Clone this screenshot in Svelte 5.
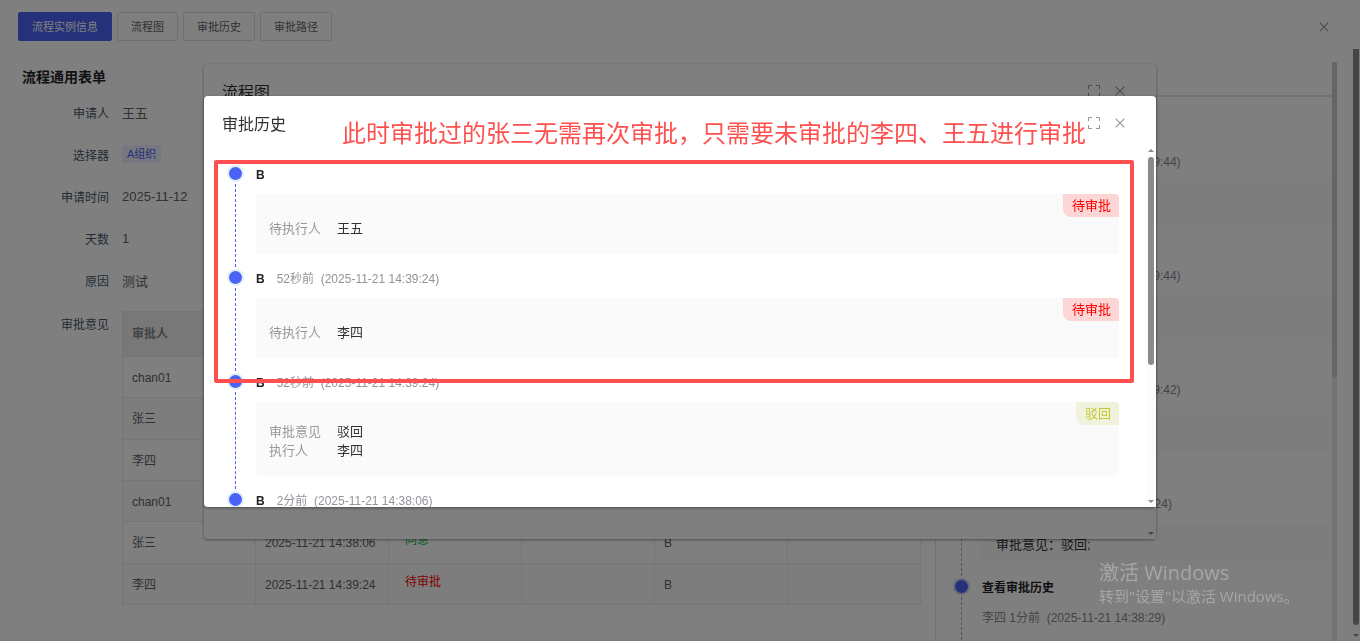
<script>
  const tabs = ['流程实例信息', '流程图', '审批历史', '审批路径'];
  let active = tabs[0];

  const columns = ['审批人', '审批时间', '审批结果', '审批意见', '节点', '备注'];
  const approvals = [
    { user: 'chan01', time: '2025-11-21 14:29:42', status: '同意', type: 'pass', node: 'A' },
    { user: '张三', time: '2025-11-21 14:29:44', status: '同意', type: 'pass', node: 'B' },
    { user: '李四', time: '2025-11-21 14:39:24', status: '驳回', type: 'back', node: 'B' },
    { user: 'chan01', time: '2025-11-21 14:38:06', status: '同意', type: 'pass', node: 'A' },
    { user: '张三', time: '2025-11-21 14:38:06', status: '同意', type: 'pass', node: 'B' },
    { user: '李四', time: '2025-11-21 14:39:24', status: '待审批', type: 'wait', node: 'B' }
  ];

  const logs = [
    { title: '查看审批历史', text: 'chan01 9分前', time: '2025-11-21 14:29:44', note: '' },
    { title: '查看审批历史', text: 'chan01 9分前', time: '2025-11-21 14:29:44', note: '' },
    { title: '查看审批历史', text: 'chan01 9分前', time: '2025-11-21 14:29:42', note: '' },
    { title: '审批', text: '李四 52秒前', time: '2025-11-21 14:39:24', note: '审批意见：驳回;' },
    { title: '查看审批历史', text: '李四 1分前', time: '2025-11-21 14:38:29', note: '' }
  ];

  const history = [
    { node: 'B', ago: '', time: '', status: '待审批', type: 'wait', rows: [['待执行人', '王五']] },
    { node: 'B', ago: '52秒前', time: '2025-11-21 14:39:24', status: '待审批', type: 'wait', rows: [['待执行人', '李四']] },
    { node: 'B', ago: '52秒前', time: '2025-11-21 14:39:24', status: '驳回', type: 'back', rows: [['审批意见', '驳回'], ['执行人', '李四']] },
    { node: 'B', ago: '2分前', time: '2025-11-21 14:38:06', status: '', type: '', rows: [] }
  ];
</script>

{#snippet closeIcon()}
  <svg width="12" height="12" viewBox="0 0 12 12" fill="none" stroke="currentColor" stroke-width="1.1">
    <path d="M1.7 1.7l8.6 8.6M10.3 1.7l-8.6 8.6" />
  </svg>
{/snippet}

{#snippet fullIcon()}
  <svg width="12" height="12" viewBox="0 0 12 12" fill="none" stroke="currentColor">
    <path d="M.5 4V.5H4M8 .5h3.500V4M11.500 8v3.500H8M4 11.500H.5V8" />
  </svg>
{/snippet}

<div class="page">
  <header>
    <nav>
      {#each tabs as tab}
        <button class="tab" class:active={tab === active} on:click={() => (active = tab)}>{tab}</button>
      {/each}
    </nav>
    <button class="icon" aria-label="关闭">{@render closeIcon()}</button>
  </header>

  <div class="content">
    <main>
      <h2>流程通用表单</h2>
      <div class="row"><span class="name">申请人</span><span>王五</span></div>
      <div class="row"><span class="name">选择器</span><span class="chip">A组织</span></div>
      <div class="row"><span class="name">申请时间</span><span>2025-11-12</span></div>
      <div class="row"><span class="name">天数</span><span>1</span></div>
      <div class="row"><span class="name">原因</span><span>测试</span></div>
      <div class="row top">
        <span class="name">审批意见</span>
        <div class="table-wrap">
          <table>
            <thead>
              <tr>{#each columns as column}<th>{column}</th>{/each}</tr>
            </thead>
            <tbody>
              {#each approvals as item}
                <tr>
                  <td>{item.user}</td>
                  <td>{item.time}</td>
                  <td><span class="status {item.type}">{item.status}</span></td>
                  <td></td>
                  <td>{item.node}</td>
                  <td></td>
                </tr>
              {/each}
            </tbody>
          </table>
        </div>
      </div>
    </main>

    <aside>
      <div class="side-body">
        <div class="side-head"></div>
        <ul class="logs">
          {#each logs as log}
            <li>
              <div class="rail"><i class="dot"></i><i class="line"></i></div>
              <div class="log">
                <strong>{log.title}</strong>
                <p>{log.text}&nbsp; ({log.time})</p>
                <div class="note">{log.note}</div>
              </div>
            </li>
          {/each}
        </ul>
      </div>
      <div class="side-bar"><i></i></div>
    </aside>

    <div class="page-bar"><i class="thumb"></i><i class="down"></i></div>
  </div>
</div>

<section class="dialog chart">
  <div class="dialog-head">
    <h3>流程图</h3>
    <button class="icon" aria-label="全屏">{@render fullIcon()}</button>
    <button class="icon" aria-label="关闭">{@render closeIcon()}</button>
  </div>
  <div class="dialog-body">
    <div class="timeline"></div>
    <div class="bar"><i class="up"></i><i class="thumb"></i><i class="down"></i></div>
  </div>
</section>

<div class="mask"></div>

<section class="dialog history">
  <div class="dialog-head">
    <h3>审批历史</h3>
    <button class="icon" aria-label="全屏">{@render fullIcon()}</button>
    <button class="icon" aria-label="关闭">{@render closeIcon()}</button>
  </div>
  <div class="dialog-body">
    <ul class="timeline">
      {#each history as item}
        <li>
          <div class="rail"><i class="dot"></i><i class="line"></i></div>
          <div class="step">
            <div class="step-head">
              <strong>{item.node}</strong>
              {#if item.time}<span>{item.ago}&nbsp; ({item.time})</span>{/if}
            </div>
            {#if item.status}
              <div class="card">
                <span class="tag {item.type}">{item.status}</span>
                {#each item.rows as [key, value]}
                  <div class="pair"><span>{key}</span>{value}</div>
                {/each}
              </div>
            {/if}
          </div>
        </li>
      {/each}
    </ul>
    <div class="bar"><i class="up"></i><i class="thumb"></i><i class="down"></i></div>
  </div>
  <p class="remark">此时审批过的张三无需再次审批，只需要未审批的李四、王五进行审批</p>
  <div class="frame"></div>
</section>

<div class="watermark">
  <p>激活 Windows</p>
  <small>转到"设置"以激活 Windows。</small>
</div>

<style>
  :global(body) {
    font-family: "Liberation Sans", "Noto Sans CJK SC", sans-serif;
    font-size: 13px;
    color: #606266;
    background: #fff;
    overflow: hidden;
  }
  h2, h3, p, ul {
    margin: 0;
    padding: 0;
    list-style: none;
  }
  button {
    font-family: inherit;
    cursor: pointer;
  }
  .page {
    display: flex;
    flex-direction: column;
    height: 100vh;
    overflow: hidden;
  }
  header {
    display: flex;
    justify-content: space-between;
    align-items: center;
    padding: 12px 30px 8px 18px;
    box-shadow: 0 1px 3px rgba(0, 0, 0, 0.04);
  }
  nav {
    display: flex;
    gap: 5px;
  }
  .tab {
    height: 29px;
    padding: 0 13px 2px;
    font-size: 11px;
    color: #606266;
    background: #fff;
    border: 1px solid #dcdfe6;
    border-radius: 2px;
  }
  .tab.active {
    color: #fff;
    background: #4a62f6;
    border-color: #4a62f6;
  }
  .icon {
    display: flex;
    padding: 0;
    border: 0;
    background: none;
    color: #909399;
  }
  .content {
    display: flex;
    flex: 1;
    min-height: 0;
  }
  main {
    flex: 1;
    min-width: 0;
    padding: 18px 14px 0 22px;
  }
  h2 {
    font-size: 14px;
    line-height: 20px;
    color: #1f2225;
    margin-bottom: 4px;
  }
  .row {
    display: flex;
    align-items: center;
    height: 42px;
  }
  .row.top {
    align-items: flex-start;
    height: auto;
    padding-top: 10px;
  }
  .name {
    width: 87px;
    margin-right: 13px;
    flex-shrink: 0;
    text-align: right;
    font-size: 12px;
    color: #48576a;
  }
  .row.top .name {
    line-height: 28px;
  }
  .chip {
    padding: 0 5px;
    font-size: 11px;
    line-height: 18px;
    color: #4a62f6;
    background: #eceffe;
    border-radius: 2px;
  }
  .table-wrap {
    flex: 1;
  }
  table {
    width: 100%;
    height: 294px;
    table-layout: fixed;
    border-collapse: collapse;
    font-size: 12px;
    line-height: 20px;
  }
  th, td {
    height: 41px;
    box-sizing: border-box;
    padding: 2px 9px 0;
    text-align: left;
    border: 1px solid #e9ebf2;
  }
  th {
    height: 45px;
    padding-top: 0;
    color: #85888e;
    background: #f1f1f2;
  }
  tbody tr:nth-child(even) {
    background: #fafafa;
  }
  .status {
    display: block;
    padding: 0 7px 6px;
  }
  .status.pass {
    color: #00b42a;
  }
  .status.back {
    color: #c0c832;
  }
  .status.wait {
    color: #f00;
  }
  aside {
    display: flex;
    width: 402px;
    margin-right: 15px;
    padding-top: 13px;
    overflow: hidden;
  }
  .side-body {
    flex: 1;
    border-left: 1px solid #e4e7ed;
  }
  .side-head {
    height: 33px;
    border-bottom: 2px solid #dfe2ea;
  }
  .logs {
    padding: 27px 0 0 18px;
  }
  li {
    display: flex;
  }
  .rail {
    display: flex;
    flex-direction: column;
    align-items: center;
    flex-shrink: 0;
    width: 14px;
  }
  .dot {
    width: 13px;
    height: 13px;
    border-radius: 50%;
    background: #4a62f6;
    box-shadow: 0 0 0 2px #e0f1fb;
  }
  .line {
    flex: 1;
    margin: 4px 0;
    border-left: 1px dashed #4a62f6;
  }
  .logs .dot {
    box-shadow: 0 0 0 2px #cbd6ee;
  }
  .logs .line {
    border-color: #94a5dc;
  }
  .log {
    flex: 1;
    margin-left: 14px;
    font-size: 12px;
    line-height: 16px;
  }
  .log strong {
    color: #1f2225;
  }
  .log p {
    margin: 14px 0 12px;
    color: #85888e;
  }
  .note {
    height: 42px;
    line-height: 42px;
    margin-bottom: 14px;
    padding-left: 14px;
    font-size: 13px;
    color: #303133;
    background: #fafafa;
    border-radius: 4px;
  }
  .side-bar {
    width: 5px;
    background: #e6e7e9;
  }
  .side-bar i {
    display: block;
    height: 315px;
    background: #c8cacf;
    border-radius: 2px;
  }
  .page-bar {
    display: flex;
    flex-direction: column;
    justify-content: space-between;
    align-items: center;
    width: 8px;
    padding-bottom: 4px;
    background: #fcfcfc;
  }
  .page-bar .thumb {
    width: 6px;
    flex: 1;
    margin-bottom: 9px;
    background: #8b8b8b;
    border-radius: 0 0 3px 3px;
  }
  .up, .down {
    width: 0;
    border: 3px solid transparent;
  }
  .up {
    border-top: 0;
    border-bottom-color: #8b8b8b;
  }
  .down {
    border-bottom: 0;
    border-top-color: #8b8b8b;
  }
  .mask {
    position: fixed;
    inset: 0;
    z-index: 2;
    background: rgba(0, 0, 0, 0.5);
  }
  .dialog {
    position: fixed;
    left: 15%;
    right: 15%;
    display: flex;
    flex-direction: column;
    background: #fff;
    border-radius: 4px;
    box-shadow: 0 1px 3px rgba(0, 0, 0, 0.4);
  }
  .chart {
    top: 10vh;
    bottom: 102px;
    z-index: 1;
  }
  .history {
    top: 15vh;
    bottom: 134px;
    z-index: 3;
  }
  .dialog-head {
    display: flex;
    align-items: center;
    gap: 14px;
    height: 53px;
    flex-shrink: 0;
    padding: 0 30px 0 18px;
  }
  h3 {
    flex: 1;
    font-size: 16px;
    font-weight: 400;
    color: #303133;
  }
  .dialog-body {
    display: flex;
    flex: 1;
    min-height: 0;
    overflow: hidden;
  }
  .timeline {
    flex: 1;
    padding: 18px 27px 0 24px;
  }
  .step {
    flex: 1;
    margin-left: 14px;
    padding-bottom: 17px;
  }
  .step-head {
    display: flex;
    gap: 12px;
    height: 16px;
    margin-bottom: 11px;
    font-size: 12px;
    line-height: 16px;
    color: #909399;
  }
  .step-head strong {
    color: #1f2225;
  }
  .card {
    position: relative;
    display: flex;
    flex-direction: column;
    justify-content: flex-end;
    min-height: 60px;
    box-sizing: border-box;
    padding: 20px 13px 16px;
    line-height: 19px;
    color: #303133;
    background: #fafafa;
    border-radius: 4px;
  }
  .pair {
    display: flex;
  }
  .pair span {
    width: 68px;
    color: #999;
  }
  .tag {
    position: absolute;
    top: 0;
    right: 0;
    padding: 0 8px 0 9px;
    line-height: 23px;
    border-radius: 0 4px 0 8px;
  }
  .tag.wait {
    color: #f00;
    background: #fcd5d5;
  }
  .tag.back {
    color: #c0c832;
    background: #f0f2dc;
  }
  .bar {
    display: flex;
    flex-direction: column;
    align-items: center;
    width: 10px;
    padding: 0 0 4px;
    background: #fcfcfc;
  }
  .bar .thumb {
    width: 6px;
    height: 208px;
    margin: 5px 0 auto;
    background: #8b8b8b;
    border-radius: 3px;
  }
  .remark {
    position: absolute;
    top: 20px;
    left: 138px;
    font-size: 24px;
    line-height: 36px;
    white-space: nowrap;
    color: #ff5050;
  }
  .frame {
    position: absolute;
    top: 64px;
    left: 10px;
    right: 22px;
    height: 223px;
    box-sizing: border-box;
    border: 4px solid #ff5050;
    border-radius: 2px;
  }
  .watermark {
    position: fixed;
    right: 60px;
    bottom: 34px;
    width: 201px;
    z-index: 4;
    font-family: "Open Sans", "Noto Sans CJK SC", sans-serif;
    color: #a6a6a6;
    white-space: nowrap;
  }
  .watermark p {
    font-size: 20px;
    line-height: 24px;
  }
  .watermark small {
    display: block;
    font-size: 15px;
    line-height: 22px;
  }
</style>
